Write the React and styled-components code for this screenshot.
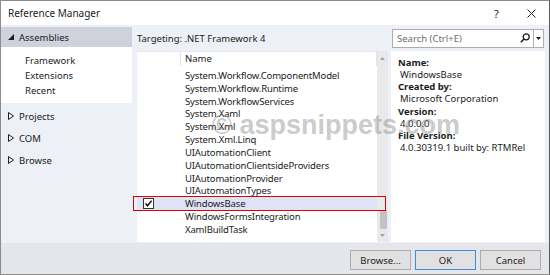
import React from 'react';
import styled, { createGlobalStyle } from 'styled-components';

const GlobalStyle = createGlobalStyle`
  html, body {
    margin: 0;
    padding: 0;
    background: #fff;
  }
  body {
    font-family: "Noto Sans", "Liberation Sans", sans-serif;
    font-size: 9.5px;
    color: #1b1b1b;
  }
`;

const Window = styled.div`
  position: relative;
  width: 550px;
  height: 275px;
  box-sizing: border-box;
  border: 1px solid #8c8c8c;
  border-right-color: #5a5a5a;
  display: flex;
  flex-direction: column;
  background: #edf0f6;
  overflow: hidden;
`;

const TitleBar = styled.div`
  height: 24px;
  flex-shrink: 0;
  background: #fff;
  display: flex;
  align-items: center;
  padding-left: 7px;
  font-size: 10px;
`;

const Title = styled.div`
  flex: 1;
`;

const TitleButton = styled.div`
  width: 35px;
  display: flex;
  justify-content: center;
  align-items: center;
  font-size: 11px;
`;

const Body = styled.div`
  flex: 1;
  display: flex;
  padding-bottom: 1px;
`;

const Nav = styled.div`
  width: 131px;
  padding-top: 2px;
`;

const NavHeader = styled.div`
  height: 20px;
  display: flex;
  align-items: center;
  gap: 5px;
  padding-left: 7px;
  background: #cfd2dc;
`;

const NavSub = styled.div`
  height: 56px;
  box-sizing: border-box;
  background: #fff;
  padding: 6px 0 0 24px;
`;

const NavSubItem = styled.div`
  height: 15px;
  line-height: 15px;
`;

const NavItem = styled.div`
  height: 22px;
  display: flex;
  align-items: center;
  gap: 5px;
  padding-left: 7px;
  &:first-of-type {
    margin-top: 1px;
  }
`;

const NavItems = styled.div`
  padding-top: 1px;
`;

const Main = styled.div`
  flex: 1;
  margin-left: 5px;
  display: grid;
  grid-template-columns: 240px 11px 157px;
  grid-template-rows: 26px 1fr;
`;

const Targeting = styled.div`
  grid-column: 1 / 3;
  display: flex;
  align-items: center;
  padding-top: 1px;
`;

const SearchCell = styled.div`
  display: flex;
  align-items: center;
  padding-left: 4px;
  padding-right: 1px;
`;

const SearchBox = styled.div`
  flex: 1;
  height: 19px;
  box-sizing: border-box;
  border: 1px solid #abadb3;
  background: #fff;
  display: flex;
  align-items: center;
`;

const SearchText = styled.div`
  flex: 1;
  padding-left: 4px;
  color: #6d6d6d;
`;

const SearchIcon = styled.div`
  width: 14px;
  display: flex;
  justify-content: center;
  border-right: 1px solid #abadb3;
  height: 100%;
  align-items: center;
  padding-right: 1px;
`;

const DropArrow = styled.div`
  width: 9px;
  display: flex;
  justify-content: center;
  align-items: center;
`;

const Table = styled.div`
  background: #fff;
  display: flex;
  flex-direction: column;
`;

const HeaderRow = styled.div`
  height: 15px;
  display: flex;
  border-top: 1px solid #e8e8e8;
  box-sizing: border-box;
`;

const HeaderCell = styled.div`
  width: ${p => (p.$w ? `${p.$w}px` : 'auto')};
  flex: ${p => (p.$w ? 'none' : 1)};
  border-right: 1px solid #e3e3e3;
  box-sizing: border-box;
  padding-left: 4px;
  line-height: 14px;
`;

const Rows = styled.div`
  padding-top: 3px;
`;

const Row = styled.div`
  position: relative;
  height: 12.83px;
  display: flex;
  align-items: center;
  background: ${p => (p.$selected ? '#dfe3f6' : 'transparent')};

  ${p => p.$selected && `
    &::after {
      content: "";
      position: absolute;
      top: -1px;
      bottom: -1px;
      left: -4px;
      right: -9px;
      border: 1px solid #e00000;
    }
  `}
`;

const CheckCell = styled.div`
  width: 44px;
  padding-left: 6px;
  box-sizing: border-box;
  display: flex;
  align-items: center;
`;

const NameCell = styled.div`
  padding-left: 4px;
  white-space: nowrap;
  letter-spacing: -0.15px;
`;

const Scrollbar = styled.div`
  background: #e9e9ec;
  display: flex;
  flex-direction: column;
  align-items: center;
`;

const ScrollButton = styled.div`
  height: ${p => p.$h}px;
  width: 100%;
  display: flex;
  justify-content: center;
  align-items: center;
`;

const ScrollSpace = styled.div`
  flex: 1;
`;

const Thumb = styled.div`
  width: 7px;
  height: 19px;
  background: #c2c3c9;
  margin-left: 1px;
`;

const Details = styled.div`
  margin-left: 3px;
  background: #fff;
  padding: 6px 7px;
`;

const DetailLine = styled.div`
  line-height: 12.15px;
  font-weight: ${p => (p.$bold ? 700 : 400)};
  padding-left: ${p => (p.$bold ? 0 : 2)}px;
  white-space: nowrap;
`;

const Footer = styled.div`
  height: 31px;
  flex-shrink: 0;
  background: #e4e6ec;
  display: flex;
  justify-content: flex-end;
  align-items: flex-start;
  gap: 4px;
  padding: 7px 8px 0 0;
  box-sizing: border-box;
`;

const Button = styled.div`
  width: 61px;
  height: 20px;
  box-sizing: border-box;
  border: 1px solid ${p => (p.$default ? '#3c8ddb' : '#adadad')};
  background: #e1e1e1;
  display: flex;
  justify-content: center;
  align-items: center;
`;

const Watermark = styled.div`
  position: absolute;
  left: 211px;
  top: 111px;
  font-family: "Liberation Sans", Arial, sans-serif;
  font-weight: 700;
  font-size: 27px;
  line-height: 27px;
  color: rgba(120, 120, 120, 0.4);
  pointer-events: none;
  white-space: nowrap;
`;

const Expanded = () => (
  <svg width="6" height="6" viewBox="0 0 6 6">
    <polygon points="6,0 6,6 0,6" fill="#1e1e1e" />
  </svg>
);

const Collapsed = () => (
  <svg width="6" height="8" viewBox="0 0 6 8">
    <polygon points="0.5,0.5 5.5,4 0.5,7.5" fill="none" stroke="#1e1e1e" strokeWidth="1" />
  </svg>
);

const CloseIcon = () => (
  <svg width="9" height="9" viewBox="0 0 9 9">
    <path d="M0.5 0.5 L8.5 8.5 M8.5 0.5 L0.5 8.5" stroke="#1e1e1e" strokeWidth="1" />
  </svg>
);

const Magnifier = () => (
  <svg width="10" height="10" viewBox="0 0 10 10">
    <circle cx="6.2" cy="3.8" r="3" fill="none" stroke="#1e1e1e" strokeWidth="1.3" />
    <path d="M4 6 L0.8 9.2" stroke="#1e1e1e" strokeWidth="1.6" />
  </svg>
);

const SmallDown = ({ color = '#1e1e1e' }) => (
  <svg width="5" height="3" viewBox="0 0 5 3">
    <polygon points="0,0 5,0 2.5,3" fill={color} />
  </svg>
);

const SmallUp = ({ color = '#1e1e1e' }) => (
  <svg width="5" height="3" viewBox="0 0 5 3">
    <polygon points="0,3 5,3 2.5,0" fill={color} />
  </svg>
);

const CheckBox = () => (
  <svg width="11" height="11" viewBox="0 0 11 11">
    <rect x="0.5" y="0.5" width="10" height="10" fill="#fff" stroke="#333" />
    <path d="M2.5 5.5 L4.5 7.8 L8.6 2.6" fill="none" stroke="#111" strokeWidth="1.5" />
  </svg>
);

const assemblies = [
  'System.Workflow.ComponentModel',
  'System.Workflow.Runtime',
  'System.WorkflowServices',
  'System.Xaml',
  'System.Xml',
  'System.Xml.Linq',
  'UIAutomationClient',
  'UIAutomationClientsideProviders',
  'UIAutomationProvider',
  'UIAutomationTypes',
  'WindowsBase',
  'WindowsFormsIntegration',
  'XamlBuildTask',
];

const details = [
  ['Name:', true],
  ['WindowsBase', false],
  ['Created by:', true],
  ['Microsoft Corporation', false],
  ['Version:', true],
  ['4.0.0.0', false],
  ['File Version:', true],
  ['4.0.30319.1 built by: RTMRel', false],
];

export default function App() {
  return (
    <>
      <GlobalStyle />
      <Window>
        <TitleBar>
          <Title>Reference Manager</Title>
          <TitleButton>?</TitleButton>
          <TitleButton><CloseIcon /></TitleButton>
        </TitleBar>
        <Body>
          <Nav>
            <NavHeader><Expanded />Assemblies</NavHeader>
            <NavSub>
              <NavSubItem>Framework</NavSubItem>
              <NavSubItem>Extensions</NavSubItem>
              <NavSubItem>Recent</NavSubItem>
            </NavSub>
            <NavItems>
              {['Projects', 'COM', 'Browse'].map(item => (
                <NavItem key={item}><Collapsed />{item}</NavItem>
              ))}
            </NavItems>
          </Nav>
          <Main>
            <Targeting>Targeting: .NET Framework 4</Targeting>
            <SearchCell>
              <SearchBox>
                <SearchText>Search (Ctrl+E)</SearchText>
                <SearchIcon><Magnifier /></SearchIcon>
                <DropArrow><SmallDown /></DropArrow>
              </SearchBox>
            </SearchCell>
            <Table>
              <HeaderRow>
                <HeaderCell $w={44} />
                <HeaderCell>Name</HeaderCell>
              </HeaderRow>
              <Rows>
                {assemblies.map(name => (
                  <Row key={name} $selected={name === 'WindowsBase'}>
                    <CheckCell>{name === 'WindowsBase' && <CheckBox />}</CheckCell>
                    <NameCell>{name}</NameCell>
                  </Row>
                ))}
              </Rows>
            </Table>
            <Scrollbar>
              <ScrollButton $h={14}><SmallUp color="#a0a0a8" /></ScrollButton>
              <ScrollSpace />
              <Thumb />
              <ScrollButton $h={13}><SmallDown color="#a0a0a8" /></ScrollButton>
            </Scrollbar>
            <Details>
              {details.map(([text, bold]) => (
                <DetailLine key={text} $bold={bold}>{text}</DetailLine>
              ))}
            </Details>
          </Main>
        </Body>
        <Footer>
          <Button>Browse...</Button>
          <Button $default>OK</Button>
          <Button>Cancel</Button>
        </Footer>
        <Watermark>© aspsnippets.com</Watermark>
      </Window>
    </>
  );
}
